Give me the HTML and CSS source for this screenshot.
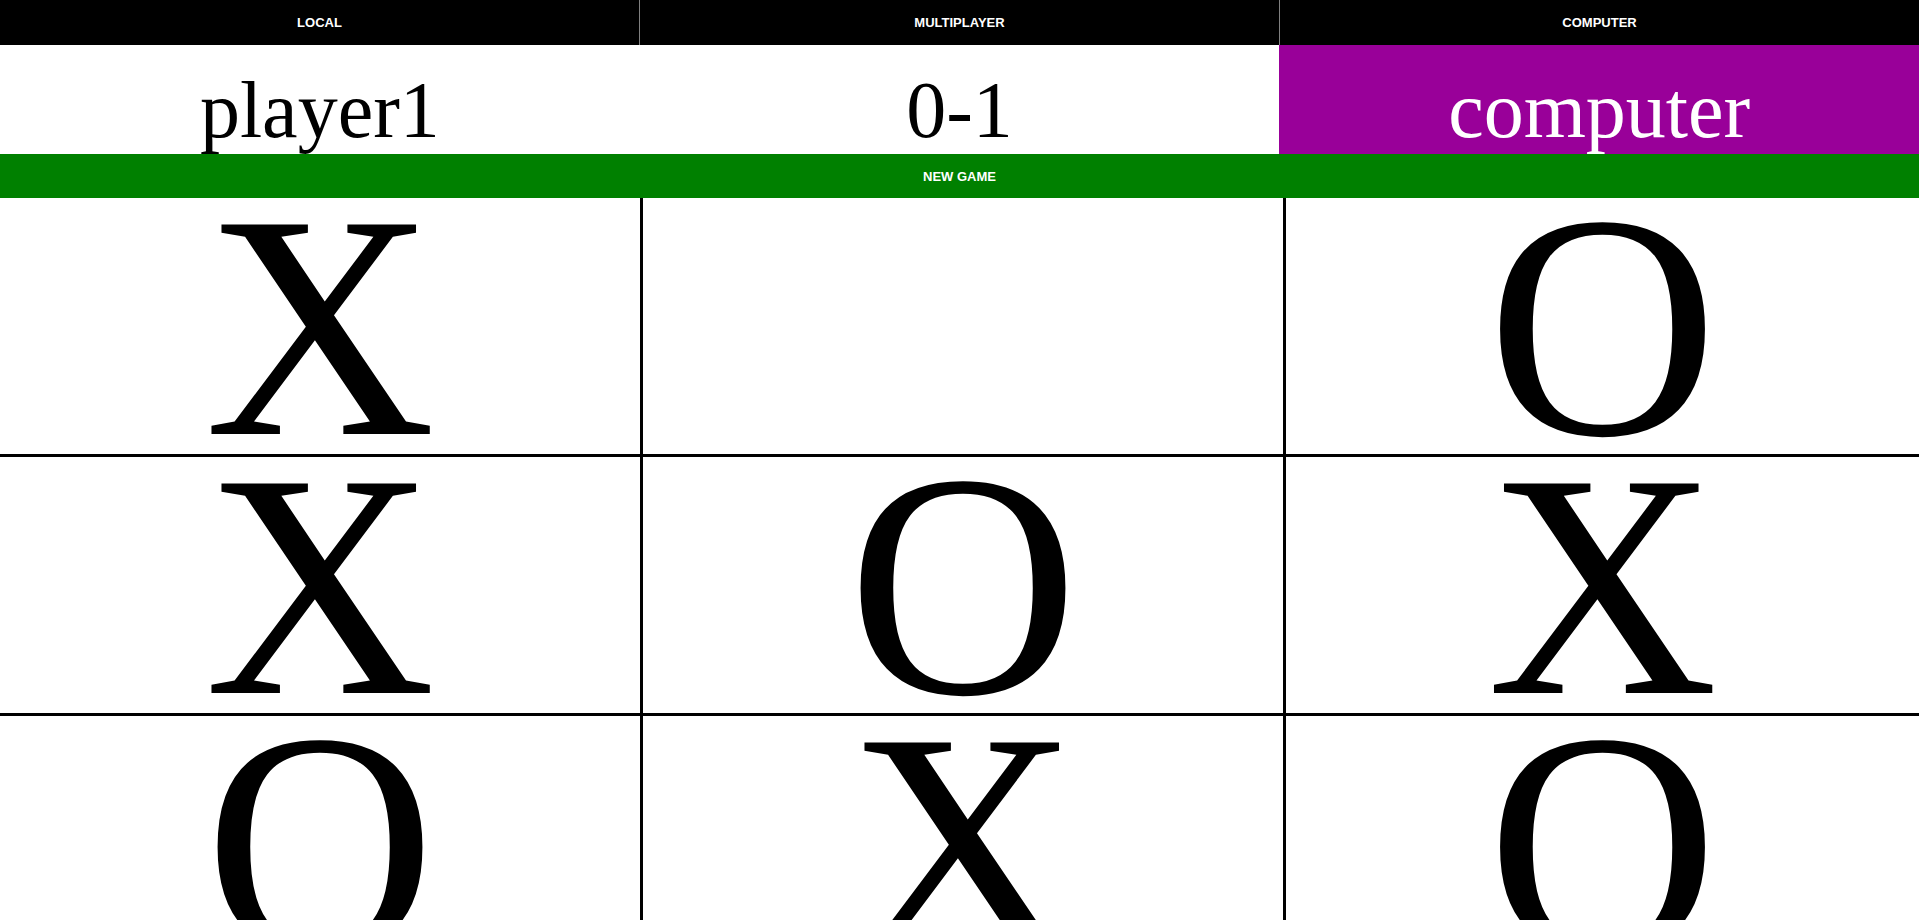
FILE: index.html
```html
<!DOCTYPE html>
<html>
<head>
<meta charset="utf-8">
<title>Tic Tac Toe</title>
<link rel="stylesheet" href="styles.css">
</head>
<body>
<nav class="modes">
  <button class="mode">LOCAL</button>
  <button class="mode">MULTIPLAYER</button>
  <button class="mode">COMPUTER</button>
</nav>
<section class="score">
  <div class="score-cell">player1</div>
  <div class="score-cell">0-1</div>
  <div class="score-cell active">computer</div>
</section>
<button class="new-game">NEW GAME</button>
<main class="board">
  <div class="cell">X</div>
  <div class="cell"></div>
  <div class="cell">O</div>
  <div class="cell">X</div>
  <div class="cell">O</div>
  <div class="cell">X</div>
  <div class="cell">O</div>
  <div class="cell">X</div>
  <div class="cell">O</div>
</main>
</body>
</html>
```
FILE: styles.css
```css
html, body {
  margin: 0;
  padding: 0;
  background: #ffffff;
}

.modes {
  display: flex;
  height: 45px;
  background: #000000;
}

.mode {
  flex: 1;
  margin: 0;
  padding: 0;
  border: none;
  background: #000000;
  color: #ffffff;
  font-family: "Liberation Sans", Arial, sans-serif;
  font-weight: bold;
  font-size: 13px;
}

.mode + .mode {
  border-left: 1px solid #808080;
}

.score {
  display: flex;
  height: 109px;
}

.score-cell {
  flex: 1;
  box-sizing: border-box;
  padding-top: 25px;
  overflow: hidden;
  text-align: center;
  font-family: "Liberation Serif", "Times New Roman", serif;
  font-size: 80px;
  line-height: 80px;
  color: #000000;
  background: #ffffff;
}

.score-cell.active {
  background: #990099;
  color: #ffffff;
}

.new-game {
  display: block;
  width: 100%;
  height: 44px;
  margin: 0;
  padding: 0;
  border: none;
  background: #008000;
  color: #ffffff;
  font-family: "Liberation Sans", Arial, sans-serif;
  font-weight: bold;
  font-size: 13px;
}

.board {
  display: grid;
  grid-template-columns: 640px 640px 1fr;
  grid-auto-rows: 256px;
  gap: 3px;
  background: #000000;
}

.cell {
  background: #ffffff;
  text-align: center;
  font-family: "Liberation Serif", "Times New Roman", serif;
  font-size: 320px;
  line-height: 256px;
  color: #000000;
}
```
